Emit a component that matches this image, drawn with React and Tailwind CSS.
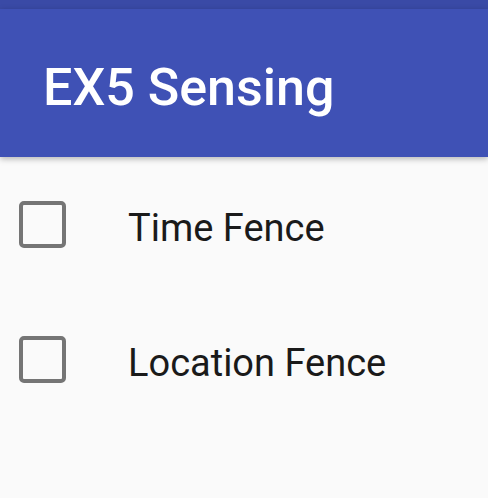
import React from 'react';

const fences = ['Time Fence', 'Location Fence'];

const App = () => {
    return (
        <div className="w-[488px] h-[498px] bg-[#fafafa] overflow-hidden" style={{ fontFamily: 'Roboto, "Noto Sans", sans-serif' }}>
            {/* status bar + toolbar */}
            <div className="h-[9px] bg-[#3a4aa6]"></div>
            <div className="h-[148px] bg-[#3f51b5] flex items-center pl-[43px] shadow-[0_2px_6px_rgba(0,0,0,0.28)] relative z-10">
                <h1 className="text-white text-[52px] font-medium leading-none pt-[10px]">EX5 Sensing</h1>
            </div>

            <div className="flex flex-col pt-[44px] gap-[88px]">
                {fences.map((label) => (
                    <label key={label} className="flex items-center h-[47px]">
                        <span className="ml-[19px] w-[47px] h-[47px] border-[4px] border-[#757575] rounded-[5px] shrink-0"></span>
                        <span className="ml-[62px] mt-[6px] text-[38px] text-[#1a1a1a] leading-none">{label}</span>
                    </label>
                ))}
            </div>
        </div>
    );
};

export default App;
